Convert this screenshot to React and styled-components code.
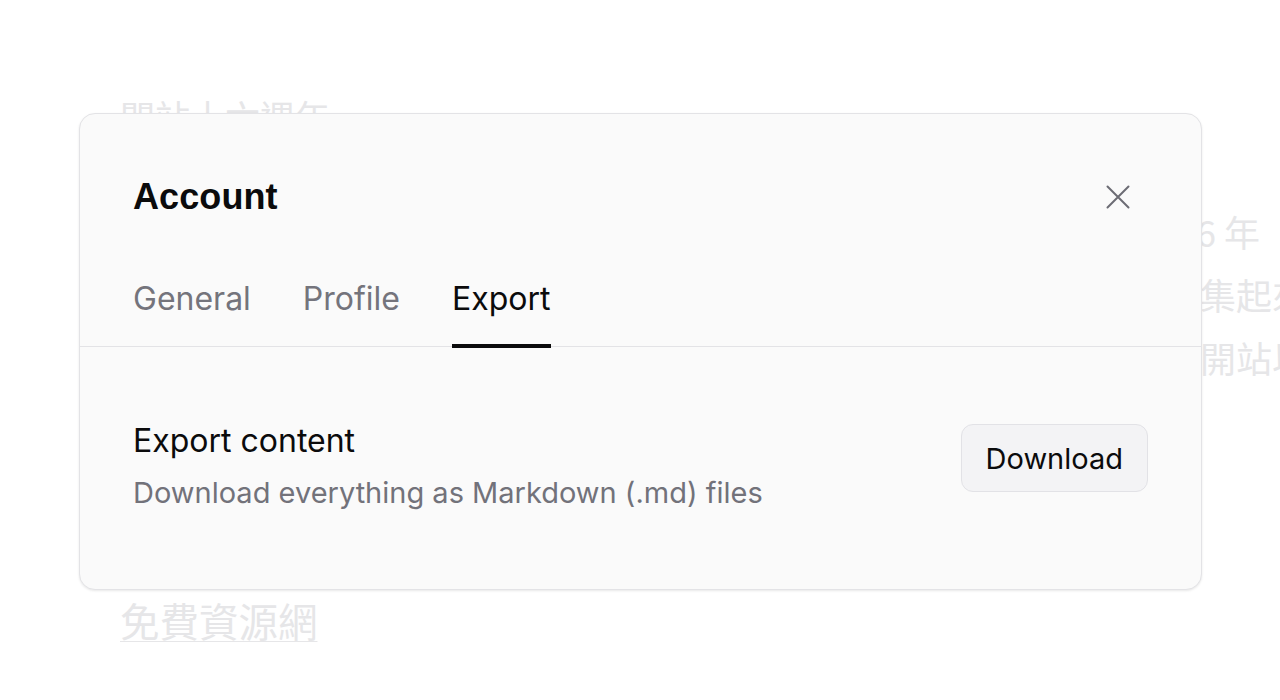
import React, { useState } from "react";
import styled, { createGlobalStyle } from "styled-components";

const Global = createGlobalStyle`
  html, body { margin: 0; padding: 0; background: #ffffff; }
  body { font-family: Inter, "Noto Sans", sans-serif; }
  * { box-sizing: border-box; }
`;

const Page = styled.div`
  position: relative;
  width: 1280px;
  height: 700px;
  overflow: hidden;
  background: #ffffff;
`;

const Article = styled.article`
  padding: 90px 0 0 120px;
  color: #e6e6e8;
  font-family: "Noto Sans CJK TC", "Noto Sans", sans-serif;
`;

const Heading = styled.h1`
  margin: 0 0 58px;
  font-size: 35px;
  line-height: 52px;
  font-weight: 400;
  color: #e6e6e8;
`;

const Para = styled.p`
  margin: 0;
  font-size: 36px;
  line-height: 63px;
  white-space: nowrap;
`;

const Line = styled.span`
  display: block;
`;

const SiteLink = styled.a`
  display: inline-block;
  margin-top: 206px;
  font-size: 39.5px;
  line-height: 50px;
  color: #e6e6e8;
  text-decoration: underline;
  text-decoration-thickness: 1px;
  text-underline-offset: 4px;
`;

const Overlay = styled.div`
  position: absolute;
  inset: 0;
  display: flex;
  align-items: flex-start;
  padding: 113px 78px 0 79px;
`;

const Modal = styled.div`
  width: 1123px;
  height: 477px;
  background: #fafafa;
  border: 1px solid #e3e3e6;
  border-radius: 16px;
  box-shadow: 0 1px 3px rgba(0, 0, 0, 0.06), 0 1px 2px rgba(0, 0, 0, 0.04);
  display: flex;
  flex-direction: column;
`;

const Header = styled.div`
  display: flex;
  align-items: center;
  justify-content: space-between;
  padding: 63px 65px 0 53px;
`;

const Title = styled.h2`
  margin: 0;
  font-family: "Liberation Sans", Arial, sans-serif;
  font-weight: 700;
  font-size: 36px;
  line-height: 40px;
  color: #0b0b0c;
  letter-spacing: 0.1px;
`;

const CloseButton = styled.button`
  border: none;
  background: transparent;
  padding: 6px;
  margin: 0;
  display: flex;
  align-items: center;
  justify-content: center;
  color: #6c6c74;
  cursor: pointer;
`;

const TabList = styled.div`
  display: flex;
  gap: 52px;
  margin-top: 64px;
  padding: 0 53px;
  border-bottom: 1px solid #e3e3e6;
`;

const Tab = styled.button`
  position: relative;
  border: none;
  background: transparent;
  margin: 0;
  padding: 0 0 29px;
  font-family: Inter, "Noto Sans", sans-serif;
  font-size: 32px;
  line-height: 36px;
  color: ${(p) => (p.$active ? "#0b0b0c" : "#74747c")};
  cursor: pointer;
  &::after {
    content: "";
    position: absolute;
    left: 0;
    right: 0;
    bottom: -2px;
    height: 4px;
    background: ${(p) => (p.$active ? "#0b0b0c" : "transparent")};
  }
`;

const Section = styled.div`
  display: flex;
  align-items: flex-start;
  justify-content: space-between;
  padding: 75px 53px 0 53px;
`;

const TextBlock = styled.div`
  display: flex;
  flex-direction: column;
  gap: 16px;
`;

const ItemTitle = styled.div`
  font-size: 32px;
  line-height: 38px;
  color: #0b0b0c;
`;

const ItemDesc = styled.div`
  font-size: 29px;
  line-height: 34px;
  color: #72727a;
`;

const ActionButton = styled.button`
  margin-top: 2px;
  height: 68px;
  padding: 0 24px;
  border: 1px solid #e2e2e6;
  border-radius: 12px;
  background: #f3f3f5;
  font-family: Inter, "Noto Sans", sans-serif;
  font-size: 29px;
  color: #0b0b0c;
  cursor: pointer;
`;

const tabs = ["General", "Profile", "Export"];

export default function App() {
  const [active, setActive] = useState("Export");
  return (
    <Page>
      <Global />
      <Article>
        <Heading>開站十六週年</Heading>
        <Para>
          <Line>免費資源網是一個分享各種實用免費軟體與線上服務的網站，從 2006 年</Line>
          <Line>持續介紹好用的工具與網路服務，將各地值得推薦的免費資源整理收集起來與讀者分享</Line>
          <Line>希望能幫助更多人找到需要的服務，也感謝所有讀者長久以來支持。開站以來</Line>
        </Para>
        <SiteLink href="#">免費資源網</SiteLink>
      </Article>
      <Overlay>
        <Modal role="dialog" aria-label="Account">
          <Header>
            <Title>Account</Title>
            <CloseButton aria-label="Close">
              <svg width="24" height="24" viewBox="0 0 24 24" fill="none" stroke="currentColor" strokeWidth="2" strokeLinecap="round">
                <path d="M1.5 1.5L22.5 22.5M22.5 1.5L1.5 22.5" />
              </svg>
            </CloseButton>
          </Header>
          <TabList>
            {tabs.map((t) => (
              <Tab key={t} $active={t === active} onClick={() => setActive(t)}>
                {t}
              </Tab>
            ))}
          </TabList>
          <Section>
            <TextBlock>
              <ItemTitle>Export content</ItemTitle>
              <ItemDesc>Download everything as Markdown (.md) files</ItemDesc>
            </TextBlock>
            <ActionButton>Download</ActionButton>
          </Section>
        </Modal>
      </Overlay>
    </Page>
  );
}
